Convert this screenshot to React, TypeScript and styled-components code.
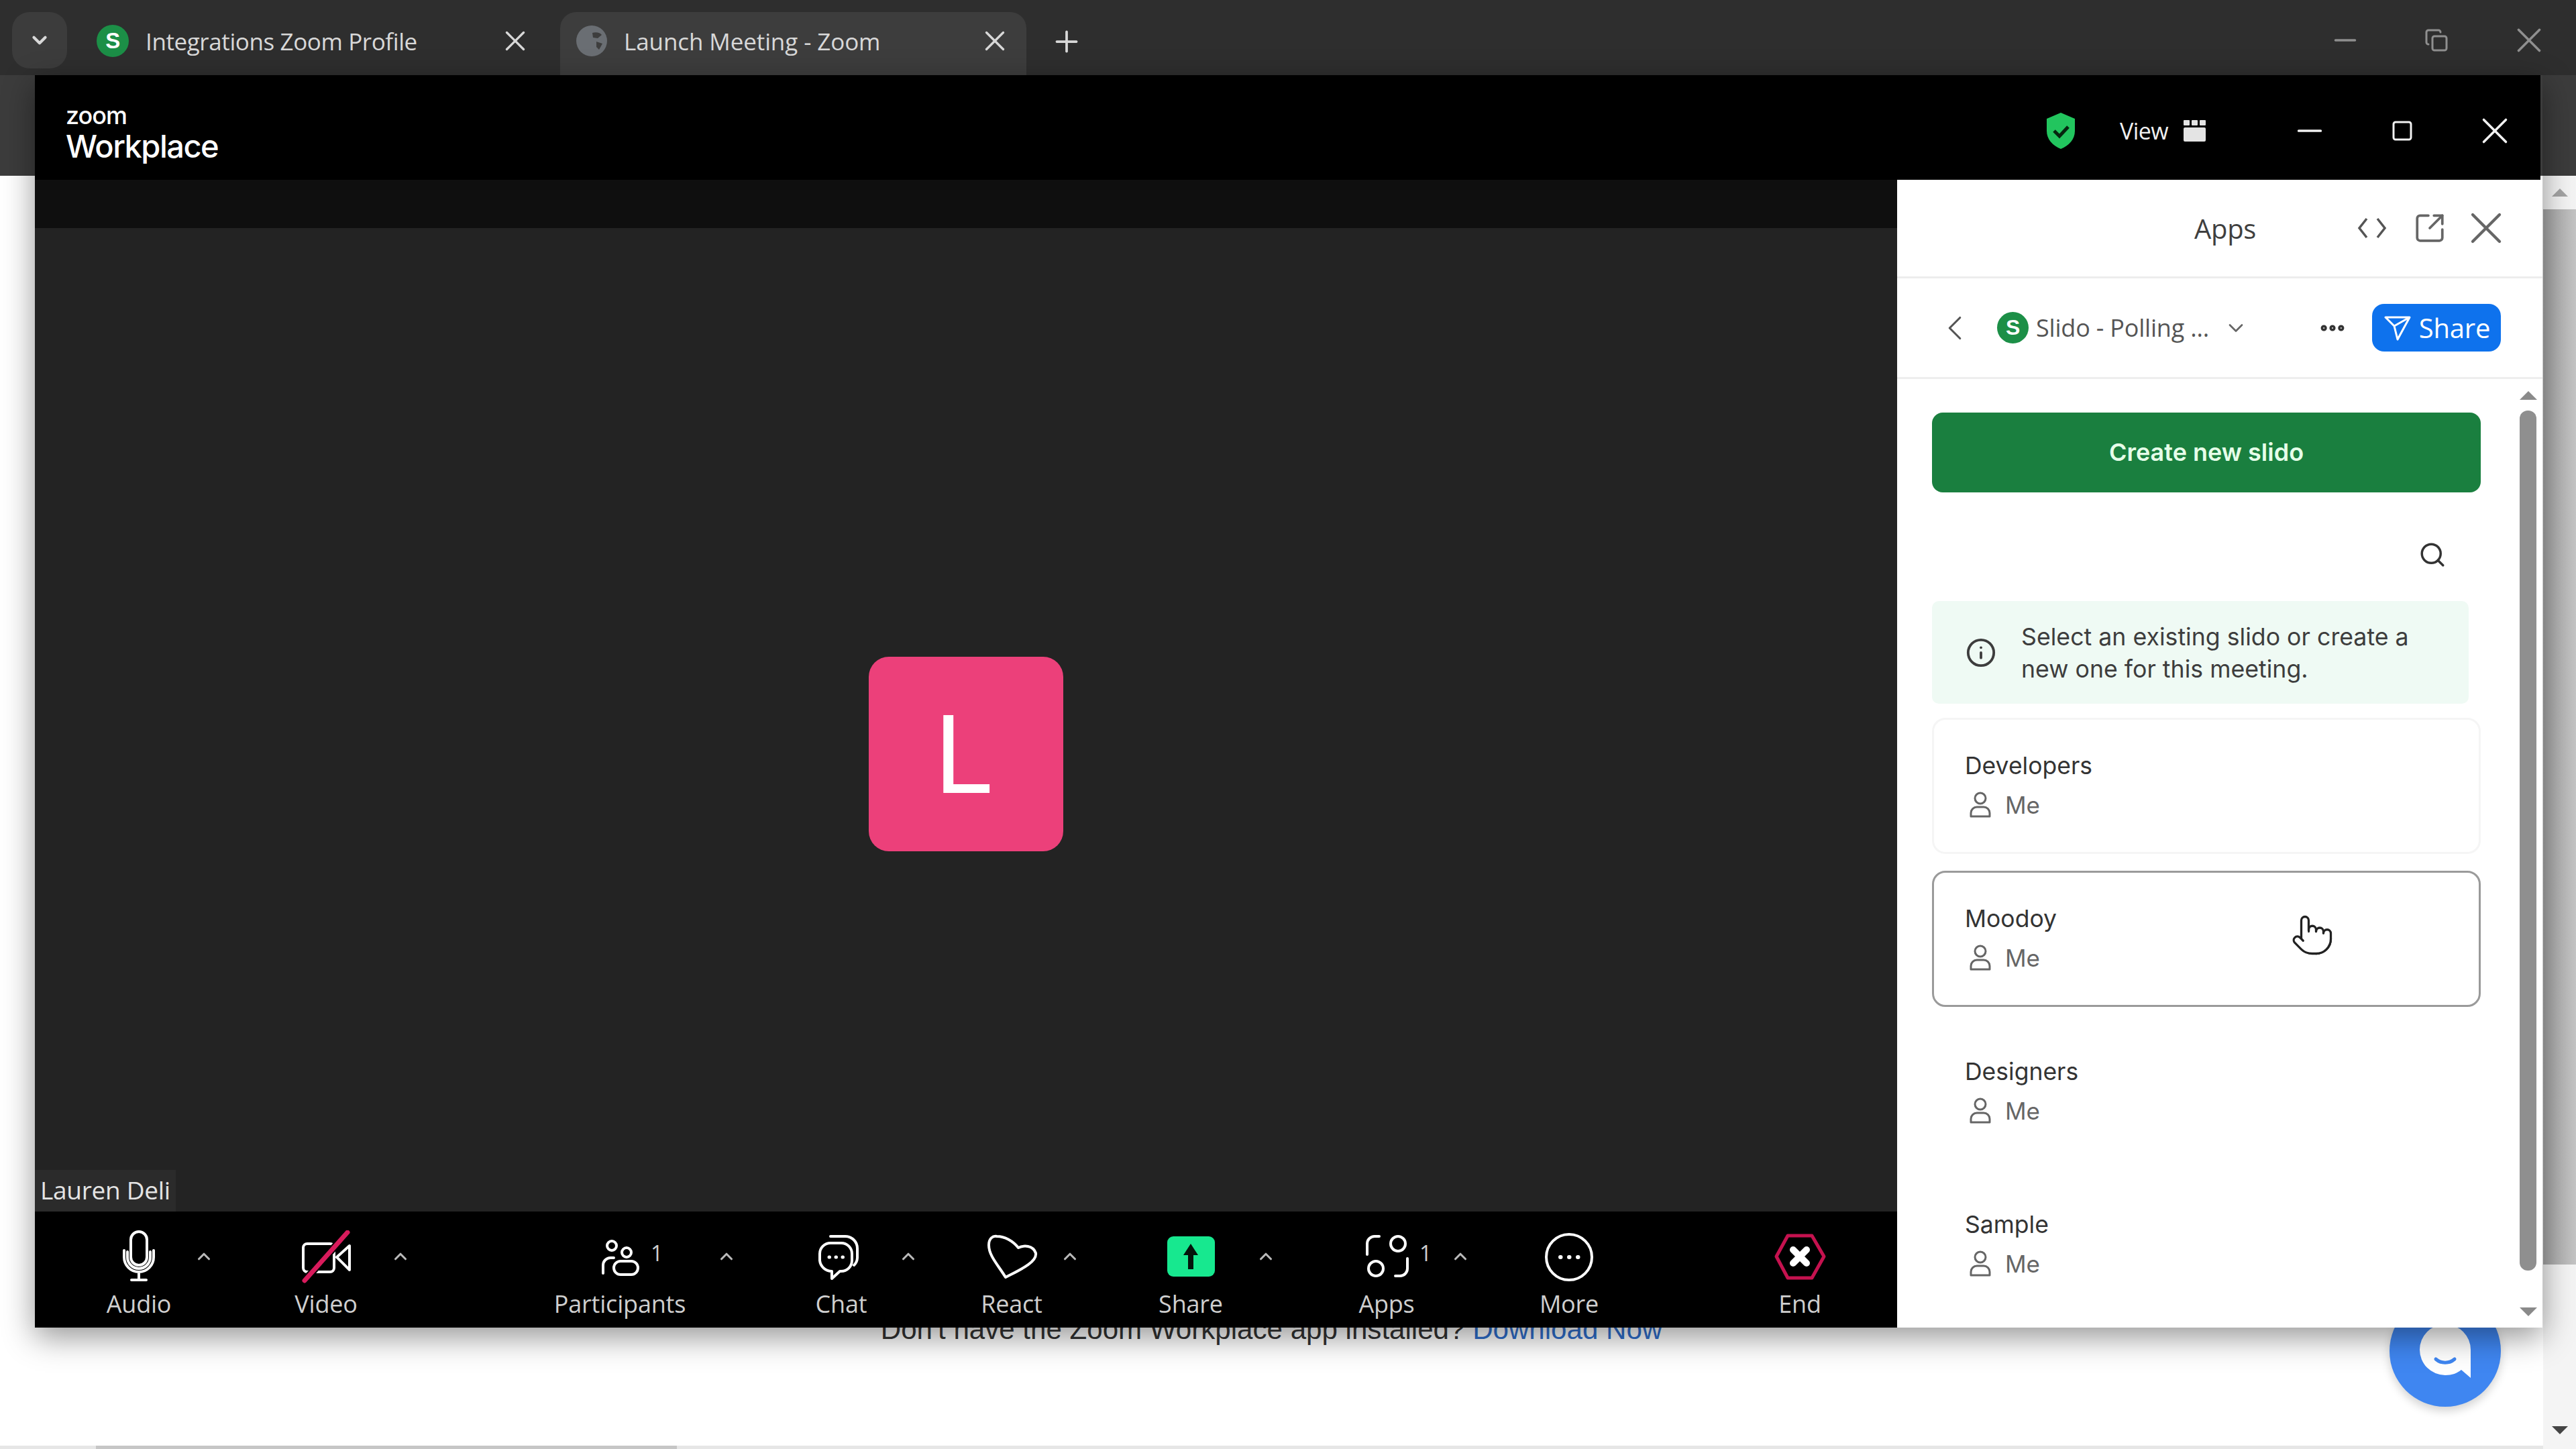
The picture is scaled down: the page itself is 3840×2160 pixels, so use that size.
import React from "react";
import styled, { createGlobalStyle } from "styled-components";
import {
  ChevronDown,
  ChevronLeft,
  ChevronUp,
  Copy,
  Ellipsis,
  Info,
  Minus,
  Plus,
  Pointer,
  Search,
  SquareArrowOutUpRight,
  X,
} from "lucide-react";

const GlobalStyle = createGlobalStyle`
  html, body {
    margin: 0;
    padding: 0;
    background: #fff;
    overflow: hidden;
  }
  * { box-sizing: border-box; }
`;

const Browser = styled.div`
  position: relative;
  width: 3840px;
  height: 2160px;
  display: flex;
  flex-direction: column;
  overflow: hidden;
  background: #fff;
  font-family: "Open Sans", sans-serif;
`;

/* browser chrome */
const TabStrip = styled.div`
  height: 112px;
  flex: none;
  background: #2e2e2e;
  display: flex;
  align-items: flex-end;
  padding-left: 18px;
  color: #d8d8d8;
`;

const TabMenu = styled.div`
  width: 82px;
  height: 84px;
  margin-bottom: 10px;
  border-radius: 26px;
  background: #3c3c3c;
  display: flex;
  align-items: center;
  justify-content: center;
`;

const Tab = styled.div<{ $active?: boolean }>`
  width: 695px;
  height: 94px;
  margin-left: 20px;
  padding: 0 22px 8px 24px;
  border-radius: 24px 24px 0 0;
  background: ${(p) => (p.$active ? "#3d3d3d" : "transparent")};
  display: flex;
  align-items: center;
  gap: 25px;
  font-size: 35px;
  letter-spacing: ${(p) => (p.$active ? "-0.1px" : "-0.4px")};
  white-space: nowrap;
  svg:last-child {
    margin-left: auto;
  }
`;

const SlidoBadge = styled.span<{ $size: number }>`
  width: ${(p) => p.$size}px;
  height: ${(p) => p.$size}px;
  flex: none;
  border-radius: 50%;
  background: #1c8f47;
  color: #fff;
  display: flex;
  align-items: center;
  justify-content: center;
  font: 700 ${(p) => Math.round(p.$size * 0.68)}px "Liberation Sans", sans-serif;
`;

const Globe = styled.span`
  width: 46px;
  height: 46px;
  flex: none;
  border-radius: 50%;
  background: #6a6e73;
  display: flex;
  align-items: center;
  justify-content: center;
`;

const NewTab = styled.div`
  margin: 0 0 12px 35px;
  height: 76px;
  display: flex;
  align-items: center;
`;

const OsControls = styled.div`
  margin-left: auto;
  height: 112px;
  padding: 8px 39px 0 0;
  display: flex;
  align-items: center;
  color: #8f8f8f;
`;

const BrowserBar = styled.div`
  height: 150px;
  flex: none;
  background: #3c3c3c;
`;

const PageArea = styled.div`
  flex: 1;
  display: flex;
  min-height: 0;
`;

const PageMain = styled.main`
  flex: 1;
  display: flex;
  flex-direction: column;
  align-items: center;
`;

const DownloadNote = styled.p`
  margin: 1694px 0 0 0;
  font: 400 42.1px/52px "Liberation Sans", sans-serif;
  color: #333;
  a {
    color: #2f6fce;
    text-decoration: none;
  }
`;

const HorizontalBar = styled.div`
  margin-top: auto;
  width: 100%;
  height: 5px;
  background: #e6e6e6;
  padding-left: 143px;
  span {
    display: block;
    width: 866px;
    height: 100%;
    background: #c6c6c6;
  }
`;

const PageScroll = styled.div`
  width: 49px;
  flex: none;
  background: #f4f4f4;
  display: flex;
  flex-direction: column;
  align-items: center;
  padding-bottom: 22px;
`;

const ArrowUp = styled.span<{ $size: number; $color: string }>`
  width: 0;
  height: 0;
  border-left: ${(p) => p.$size}px solid transparent;
  border-right: ${(p) => p.$size}px solid transparent;
  border-bottom: ${(p) => p.$size}px solid ${(p) => p.$color};
`;

const ArrowDown = styled.span<{ $size: number; $color: string }>`
  width: 0;
  height: 0;
  border-left: ${(p) => p.$size}px solid transparent;
  border-right: ${(p) => p.$size}px solid transparent;
  border-top: ${(p) => p.$size}px solid ${(p) => p.$color};
`;

const PageScrollTop = styled.div`
  height: 50px;
  width: 100%;
  display: flex;
  align-items: center;
  justify-content: center;
`;

const PageThumb = styled.div`
  width: 100%;
  height: 1573px;
  margin-bottom: auto;
  background: linear-gradient(90deg, #a6a6a6, #c4c4c4);
`;

const ChatFab = styled.div`
  position: absolute;
  left: 3562px;
  top: 1931px;
  width: 166px;
  height: 166px;
  border-radius: 50%;
  background: #3f86f1;
  box-shadow: 0 6px 14px rgba(0, 0, 0, 0.18);
  display: flex;
  align-items: center;
  justify-content: center;
`;

/* zoom window */
const ZoomWindow = styled.section`
  position: absolute;
  left: 52px;
  top: 112px;
  width: 3738px;
  height: 1867px;
  display: flex;
  flex-direction: column;
  box-shadow: 0 14px 44px rgba(0, 0, 0, 0.42);
`;

const TitleBar = styled.header`
  height: 156px;
  flex: none;
  width: 3735px;
  background: #000;
  color: #f1f1f1;
  display: flex;
  align-items: center;
  padding: 10px 35px 0 46px;
`;

const Logo = styled.div`
  display: flex;
  flex-direction: column;
  font-family: Inter, sans-serif;
  color: #fff;
  margin-top: 6px;
  small {
    font-size: 36px;
    line-height: 40px;
    font-weight: 500;
    letter-spacing: -1px;
  }
  strong {
    font-size: 47px;
    line-height: 52px;
    font-weight: 500;
    letter-spacing: -1.5px;
  }
`;

const TitleRight = styled.div`
  margin-left: auto;
  display: flex;
  align-items: center;
`;

const ViewLabel = styled.span`
  margin-left: 65px;
  font: 400 34px "Open Sans", sans-serif;
  letter-spacing: -0.6px;
`;

const TitleIcon = styled.span<{ $ml: number }>`
  margin-left: ${(p) => p.$ml}px;
  display: flex;
  align-items: center;
`;

const WindowBody = styled.div`
  flex: 1;
  display: flex;
  min-height: 0;
`;

const MeetingColumn = styled.div`
  width: 2776px;
  flex: none;
  display: flex;
  flex-direction: column;
  background: #232323;
`;

const TopStrip = styled.div`
  height: 72px;
  flex: none;
  background: #0f0f0f;
`;

const Stage = styled.div`
  flex: 1;
  position: relative;
  display: flex;
  align-items: center;
  justify-content: center;
  padding-top: 101px;
`;

const Avatar = styled.div`
  width: 290px;
  height: 290px;
  border-radius: 30px;
  background: #ec407a;
  color: #fff;
  display: flex;
  align-items: center;
  justify-content: center;
  padding-right: 5px;
  font: 400 160px Inter, sans-serif;
`;

const NameTag = styled.div`
  position: absolute;
  left: 0;
  bottom: 0;
  height: 62px;
  padding: 0 8px 3px;
  background: #2b2b2b;
  color: #e4e4e4;
  display: flex;
  align-items: center;
  font-size: 37px;
  letter-spacing: -0.3px;
`;

const Toolbar = styled.nav`
  height: 173px;
  flex: none;
  background: #000;
  display: flex;
  align-items: flex-start;
  padding-top: 28px;
`;

const ToolButton = styled.div<{ $ml: number; $w: number }>`
  position: relative;
  margin-left: ${(p) => p.$ml}px;
  width: ${(p) => p.$w}px;
  flex: none;
  display: flex;
  flex-direction: column;
  align-items: center;
  color: #cfcfcf;
  font-size: 36px;
  font-weight: 500;
  line-height: 44px;
  letter-spacing: -0.2px;
  svg {
    display: block;
    margin-bottom: 8px;
  }
`;

const ToolCount = styled.span<{ $left: number }>`
  position: absolute;
  left: ${(p) => p.$left}px;
  top: 12px;
  color: #cfcfcf;
  font-size: 32px;
`;

const Caret = styled.span<{ $ml: number }>`
  margin-left: ${(p) => p.$ml}px;
  margin-top: 24px;
  width: 40px;
  flex: none;
  display: flex;
  justify-content: center;
  color: #b9b9b9;
`;

/* apps panel */
const AppsPanel = styled.aside`
  flex: 1;
  min-width: 0;
  background: #fff;
  display: flex;
  flex-direction: column;
  color: #333;
`;

const PanelHeader = styled.div`
  height: 147px;
  flex: none;
  border-bottom: 3px solid #ededed;
  display: flex;
  align-items: center;
  padding-left: 443px;
  font-size: 40px;
  letter-spacing: -0.3px;
  color: #3f3f3f;
`;

const PanelIcon = styled.span<{ $ml: number }>`
  margin-left: ${(p) => p.$ml}px;
  display: flex;
  color: #666;
`;

const AppRow = styled.div`
  height: 150px;
  flex: none;
  border-bottom: 3px solid #eeeeee;
  display: flex;
  align-items: center;
  font-size: 36px;
  color: #555;
  letter-spacing: -0.2px;
  padding-left: 55px;
  white-space: nowrap;
`;

const AppName = styled.span`
  margin-left: 11px;
`;

const ShareButton = styled.div`
  margin-left: 37px;
  width: 192px;
  height: 71px;
  border-radius: 18px;
  background: #0e72ed;
  color: #fff;
  display: flex;
  align-items: center;
  justify-content: center;
  gap: 12px;
  padding-left: 2px;
  font-size: 40px;
`;

const PanelBody = styled.div`
  flex: 1;
  min-height: 0;
  display: flex;
`;

const PanelContent = styled.div`
  width: 870px;
  flex: none;
  padding: 50px 0 0 52px;
  font-family: Inter, sans-serif;
`;

const CreateButton = styled.div`
  width: 818px;
  height: 119px;
  border-radius: 16px;
  background: #1a7f3f;
  color: #e6ffe9;
  display: flex;
  align-items: center;
  justify-content: center;
  padding-bottom: 2px;
  font-size: 36px;
  font-weight: 600;
`;

const SearchRow = styled.div`
  height: 162px;
  width: 818px;
  padding: 24px 51px 0 0;
  display: flex;
  align-items: center;
  justify-content: flex-end;
  color: #333;
`;

const InfoBox = styled.div`
  width: 800px;
  height: 153px;
  border-radius: 10px;
  background: #effaf4;
  padding: 0 70px 0 50px;
  display: flex;
  align-items: center;
  gap: 37px;
  color: #3d3d3d;
  font-size: 35.7px;
  line-height: 48px;
  svg {
    flex: none;
  }
`;

const SlidoList = styled.div`
  display: flex;
  flex-direction: column;
  gap: 25px;
  margin-top: 21px;
`;

const SlidoCard = styled.div<{ $hover?: boolean; $faint?: boolean }>`
  position: relative;
  width: 818px;
  height: 203px;
  padding: 46px 0 0 46px;
  border-radius: 20px;
  border: 3px solid
    ${(p) => (p.$hover ? "#9a9a9a" : p.$faint ? "#f5f5f5" : "transparent")};
`;

const CardTitle = styled.div`
  font-size: 35.5px;
  line-height: 46px;
  color: #333;
`;

const CardOwner = styled.div`
  margin-top: 12px;
  display: flex;
  align-items: center;
  gap: 20px;
  font-size: 35px;
  line-height: 46px;
  color: #666;
  svg {
    margin-left: 6px;
  }
`;

const HandCursor = styled.span`
  position: absolute;
  left: 531px;
  top: 60px;
  display: flex;
  color: #222;
  svg {
    fill: #fff;
  }
`;

const PanelScroll = styled.div`
  width: 25px;
  margin-left: 58px;
  flex: none;
  display: flex;
  flex-direction: column;
  align-items: center;
  padding: 18px 0 17px;
`;

const PanelThumb = styled.div`
  width: 25px;
  height: 1282px;
  margin: 16px 0 auto;
  border-radius: 12px;
  background: #8f8f8f;
`;

type ToolItem = {
  label: string;
  icon: React.ReactNode;
  ml: number;
  w: number;
  caret?: number;
  count?: number;
};

const Ico = ({ children }: { children: React.ReactNode }) => (
  <svg width="80" height="80" viewBox="0 0 80 80" fill="none" stroke="#fff" strokeWidth="4" strokeLinecap="round" strokeLinejoin="round">
    {children}
  </svg>
);

const tools: ToolItem[] = [
  {
    label: "Audio",
    ml: 95,
    w: 120,
    caret: 17,
    icon: (
      <Ico>
        <rect x="28" y="2" width="24" height="50" rx="12" />
        <path d="M18 30v10a22 22 0 0 0 44 0V30M23 32v8a17 17 0 0 0 34 0v-8M40 62v11M29 74h22" />
      </Ico>
    ),
  },
  {
    label: "Video",
    ml: 102,
    w: 120,
    caret: 31,
    icon: (
      <Ico>
        <rect x="6" y="20" width="46" height="42" rx="6" />
        <path d="M56 40 75 23v36Z" />
        <path d="M72 3 8 75" stroke="#000" strokeWidth="11" />
        <path d="M72 3 8 75" stroke="#d81b5c" strokeWidth="7" />
      </Ico>
    ),
  },
  {
    label: "Participants",
    ml: 207,
    w: 200,
    caret: 39,
    count: 146,
    icon: (
      <Ico>
        <circle cx="28" cy="23" r="7" />
        <circle cx="50" cy="33" r="7" />
        <path d="M15 64V52a11 11 0 0 1 11-11h5" />
        <rect x="31" y="46" width="36" height="20" rx="10" />
      </Ico>
    ),
  },
  {
    label: "Chat",
    ml: 91,
    w: 120,
    caret: 20,
    icon: (
      <Ico>
        <path d="M24 9h22a18 18 0 0 1 18 18v14a16 16 0 0 1-5 11" />
        <path d="M24 19h16a16 16 0 0 1 16 16v10a16 16 0 0 1-16 16h-2L26 72v-11a18 18 0 0 1-18-16V35a16 16 0 0 1 16-16Z" />
        <path d="M22 40h.5M32 40h.5M42 40h.5" strokeWidth="5" />
      </Ico>
    ),
  },
  {
    label: "React",
    ml: 74,
    w: 120,
    caret: 7,
    icon: (
      <Ico>
        <path d="M31 70C20 52 6 38 6 22 6 12 12 8 18 9c12 0 24 7 32 17 8-4 22-4 26 8 2 14-26 26-45 36Z" />
      </Ico>
    ),
  },
  {
    label: "Share",
    ml: 100,
    w: 120,
    caret: 32,
    icon: (
      <Ico>
        <rect x="5" y="9" width="71" height="60" rx="9" fill="#17e88f" stroke="none" />
        <path d="M40 20 51 37h-7v21h-8V37h-7Z" fill="#04140c" stroke="none" />
      </Ico>
    ),
  },
  {
    label: "Apps",
    ml: 100,
    w: 120,
    caret: 30,
    count: 109,
    icon: (
      <Ico>
        <path d="M11 36V20a11 11 0 0 1 11-11h7" />
        <circle cx="57" cy="20" r="11" />
        <circle cx="24" cy="57" r="11" />
        <path d="M71 42v15a11 11 0 0 1-11 11h-7" />
      </Ico>
    ),
  },
  {
    label: "More",
    ml: 82,
    w: 120,
    icon: (
      <Ico>
        <circle cx="40" cy="40" r="34" />
        <path d="M27 40h.5M40 40h.5M53 40h.5" strokeWidth="6" />
      </Ico>
    ),
  },
  {
    label: "End",
    ml: 224,
    w: 120,
    icon: (
      <Ico>
        <path d="M5 39 22 8h36l18 31-18 32H22Z" stroke="#c5124f" strokeWidth="5" />
        <path d="M30 29l20 20M50 29 30 49" strokeWidth="10" />
      </Ico>
    ),
  },
];

const slidos = ["Developers", "Moodoy", "Designers", "Sample"];

const PersonIcon = () => (
  <svg width="34" height="40" viewBox="0 0 34 40" fill="none" stroke="#666" strokeWidth="3">
    <circle cx="17" cy="10" r="8" />
    <path d="M3 37v-5a9 9 0 0 1 9-9h10a9 9 0 0 1 9 9v5Z" strokeLinejoin="round" />
  </svg>
);

const App: React.FC = () => {
  return (
    <>
      <GlobalStyle />
      <Browser>
        <TabStrip>
          <TabMenu>
            <ChevronDown size={34} strokeWidth={3} />
          </TabMenu>
          <Tab>
            <SlidoBadge $size={48}>S</SlidoBadge>
            Integrations Zoom Profile
            <X size={50} strokeWidth={1.6} />
          </Tab>
          <Tab $active>
            <Globe>
              <svg width="30" height="30" viewBox="0 0 30 30" fill="#3d3d3d">
                <path d="M8 3c6-2 12 0 14 3l-6 5-7-1ZM14 16l9 3-5 9-4-4Z" />
              </svg>
            </Globe>
            Launch Meeting - Zoom
            <X size={50} strokeWidth={1.6} />
          </Tab>
          <NewTab>
            <Plus size={50} strokeWidth={1.8} />
          </NewTab>
          <OsControls>
            <Minus size={50} strokeWidth={1.6} />
            <TitleIcon $ml={93}>
              <Copy size={36} strokeWidth={2} />
            </TitleIcon>
            <TitleIcon $ml={89}>
              <X size={62} strokeWidth={1.4} />
            </TitleIcon>
          </OsControls>
        </TabStrip>
        <BrowserBar />
        <PageArea>
          <PageMain>
            <DownloadNote>
              Don't have the Zoom Workplace app installed? <a>Download Now</a>
            </DownloadNote>
            <HorizontalBar>
              <span />
            </HorizontalBar>
          </PageMain>
          <PageScroll>
            <PageScrollTop>
              <ArrowUp $size={12} $color="#a5a5a5" />
            </PageScrollTop>
            <PageThumb />
            <ArrowDown $size={12} $color="#444" />
          </PageScroll>
        </PageArea>
        <ChatFab>
          <svg width="100" height="100" viewBox="0 0 100 100">
            <path d="M50 10a38 38 0 1 0 0 76c10 0 18-3 24-8l14 12V48a38 38 0 0 0-38-38Z" fill="#fff" />
            <path d="M36 62c8 7 20 7 28 0" stroke="#3f86f1" strokeWidth="5" fill="none" strokeLinecap="round" />
          </svg>
        </ChatFab>
        <ZoomWindow>
          <TitleBar>
            <Logo>
              <small>zoom</small>
              <strong>Workplace</strong>
            </Logo>
            <TitleRight>
              <svg width="46" height="54" viewBox="0 0 46 54">
                <path d="M23 0 44 9v18c0 13-9 22-21 27C11 49 2 40 2 27V9Z" fill="#22c55e" />
                <path d="M13 27l8 8 13-14" stroke="#06260f" strokeWidth="5" fill="none" />
              </svg>
              <ViewLabel>View</ViewLabel>
              <TitleIcon $ml={23}>
                <svg width="33" height="32" viewBox="0 0 33 32" fill="#e4e4e4">
                  <rect x="0" y="0" width="9" height="8" rx="1" />
                  <rect x="12" y="0" width="9" height="8" rx="1" />
                  <rect x="24" y="0" width="9" height="8" rx="1" />
                  <rect x="0" y="11" width="33" height="21" rx="2" />
                </svg>
              </TitleIcon>
              <TitleIcon $ml={127}>
                <Minus size={56} strokeWidth={1.6} />
              </TitleIcon>
              <TitleIcon $ml={95}>
                <svg width="30" height="30" viewBox="0 0 30 30" fill="none" stroke="#f1f1f1" strokeWidth="3">
                  <rect x="2" y="2" width="26" height="26" rx="3" />
                </svg>
              </TitleIcon>
              <TitleIcon $ml={90}>
                <X size={66} strokeWidth={1.3} />
              </TitleIcon>
            </TitleRight>
          </TitleBar>
          <WindowBody>
            <MeetingColumn>
              <TopStrip />
              <Stage>
                <Avatar>L</Avatar>
                <NameTag>Lauren Deli</NameTag>
              </Stage>
              <Toolbar>
                {tools.map((tool) => (
                  <React.Fragment key={tool.label}>
                    <ToolButton $ml={tool.ml} $w={tool.w}>
                      {tool.icon}
                      {tool.label}
                      {tool.count && <ToolCount $left={tool.count}>1</ToolCount>}
                    </ToolButton>
                    {tool.caret !== undefined && (
                      <Caret $ml={tool.caret}>
                        <ChevronUp size={30} strokeWidth={2.5} />
                      </Caret>
                    )}
                  </React.Fragment>
                ))}
              </Toolbar>
            </MeetingColumn>
            <AppsPanel>
              <PanelHeader>
                Apps
                <PanelIcon $ml={151}>
                  <svg width="44" height="34" viewBox="0 0 44 34" fill="none" stroke="#555" strokeWidth="3.5">
                    <path d="M14 3 3 17l11 14M30 3l11 14-11 14" />
                  </svg>
                </PanelIcon>
                <PanelIcon $ml={39}>
                  <SquareArrowOutUpRight size={50} strokeWidth={1.8} />
                </PanelIcon>
                <PanelIcon $ml={19}>
                  <X size={80} strokeWidth={1.3} />
                </PanelIcon>
              </PanelHeader>
              <AppRow>
                <ChevronLeft size={62} strokeWidth={1.2} />
                <PanelIcon $ml={32}>
                  <SlidoBadge $size={47}>S</SlidoBadge>
                </PanelIcon>
                <AppName>Slido - Polling ...</AppName>
                <PanelIcon $ml={22}>
                  <ChevronDown size={36} strokeWidth={1.8} />
                </PanelIcon>
                <PanelIcon $ml={104}>
                  <Ellipsis size={44} strokeWidth={3} color="#333" />
                </PanelIcon>
                <ShareButton>
                  <svg width="40" height="40" viewBox="0 0 40 40" fill="none" stroke="#fff" strokeWidth="3" strokeLinejoin="round">
                    <path d="M2 4h36L20 37l-5-20Zm13 13L38 4" />
                  </svg>
                  Share
                </ShareButton>
              </AppRow>
              <PanelBody>
                <PanelContent>
                  <CreateButton>Create new slido</CreateButton>
                  <SearchRow>
                    <Search size={42} strokeWidth={2} />
                  </SearchRow>
                  <InfoBox>
                    <Info size={46} strokeWidth={2} />
                    <span>Select an existing slido or create a new one for this meeting.</span>
                  </InfoBox>
                  <SlidoList>
                    {slidos.map((name, i) => (
                      <SlidoCard key={name} $hover={i === 1} $faint={i === 0}>
                        <CardTitle>{name}</CardTitle>
                        <CardOwner>
                          <PersonIcon />
                          Me
                        </CardOwner>
                        {i === 1 && (
                          <HandCursor>
                            <Pointer size={66} strokeWidth={1.2} />
                          </HandCursor>
                        )}
                      </SlidoCard>
                    ))}
                  </SlidoList>
                </PanelContent>
                <PanelScroll>
                  <ArrowUp $size={13} $color="#8a8a8a" />
                  <PanelThumb />
                  <ArrowDown $size={13} $color="#8a8a8a" />
                </PanelScroll>
              </PanelBody>
            </AppsPanel>
          </WindowBody>
        </ZoomWindow>
      </Browser>
    </>
  );
};

export default App;
